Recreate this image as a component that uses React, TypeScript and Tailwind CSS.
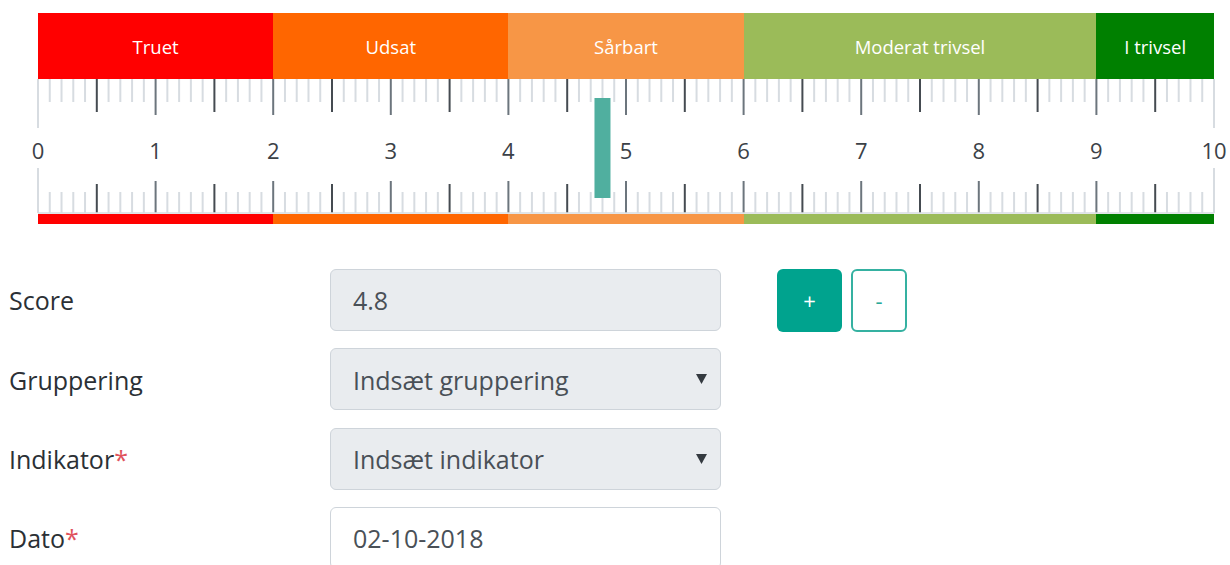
import React from 'react';

type Segment = { label: string; units: number; basis: string; bg: string };

const SEGMENTS: Segment[] = [
  { label: 'Truet', units: 2, basis: 'basis-[20%]', bg: 'bg-[#ff0000]' },
  { label: 'Udsat', units: 2, basis: 'basis-[20%]', bg: 'bg-[#ff6600]' },
  { label: 'Sårbart', units: 2, basis: 'basis-[20%]', bg: 'bg-[#f79646]' },
  { label: 'Moderat trivsel', units: 3, basis: 'basis-[30%]', bg: 'bg-[#9bbb59]' },
  { label: 'I trivsel', units: 1, basis: 'basis-[10%]', bg: 'bg-[#008000]' },
];

const WIDTH = 1176;
const STEP = WIDTH / 100;

// tick heights measured from the top (upper row) and bottom (lower row) of the scale
function Ticks({ score }: { score: number }) {
  const ticks = [];
  for (let i = 0; i <= 100; i++) {
    const x = i * STEP;
    let top = 23;
    let bottom = 21;
    let color = '#d7dce1';
    if (i === 0 || i === 100) {
      top = 49;
      bottom = 45;
    } else if (i % 10 === 0) {
      top = 36;
      bottom = 32;
      color = '#6c757d';
    } else if (i % 5 === 0) {
      top = 33;
      bottom = 29;
      color = '#454b51';
    }
    ticks.push(
      <g key={i}>
        <line x1={x} x2={x} y1={0} y2={top} stroke={color} strokeWidth={2} />
        <line x1={x} x2={x} y1={134 - bottom} y2={134} stroke={color} strokeWidth={2} />
      </g>
    );
  }
  const mx = score * STEP * 10;
  return (
    <svg width={WIDTH} height={135} className="absolute left-0 top-0 overflow-visible">
      {ticks}
      <line x1={0} x2={WIDTH} y1={134} y2={134} stroke="#d7dce1" strokeWidth={1.5} />
      <rect x={mx - 8} y={19} width={16} height={100} fill="#50af9f" />
    </svg>
  );
}

function Scale({ score }: { score: number }) {
  return (
    <div className="ml-[29px] w-[1176px]">
      <div className="flex h-[66px]">
        {SEGMENTS.map((s) => (
          <div
            key={s.label}
            className={`${s.basis} ${s.bg} flex items-center justify-center pt-[2px] text-[18.5px] text-white`}
          >
            {s.label}
          </div>
        ))}
      </div>
      <div className="relative h-[135px]">
        <Ticks score={score} />
        {Array.from({ length: 11 }, (_, n) => (
          <span
            key={n}
            className="absolute top-[70.5px] -translate-x-1/2 -translate-y-1/2 text-[22px] leading-none text-[#3b4147]"
            style={{ left: n * STEP * 10 }}
          >
            {n}
          </span>
        ))}
      </div>
      <div className="flex h-[10px]">
        {SEGMENTS.map((s) => (
          <div key={s.label} className={`${s.basis} ${s.bg}`} />
        ))}
      </div>
    </div>
  );
}

function Row({ label, required, children }: { label: string; required?: boolean; children: React.ReactNode }) {
  return (
    <div className="flex h-[62px] items-center">
      <div className="w-[321px] pt-[2px] text-[25px] text-[#2b3035]">
        {label}
        {required && <span className="text-[#e0525c]">*</span>}
      </div>
      {children}
    </div>
  );
}

function Caret() {
  return (
    <svg width="11" height="10" viewBox="0 0 11 10" className="absolute right-[13px] top-1/2 -translate-y-1/2">
      <path d="M0 0 H11 L5.5 10 Z" fill="#343a40" />
    </svg>
  );
}

export default function App() {
  const score = 4.8;
  const field = 'relative flex h-[62px] w-[391px] items-center rounded-[6px] border border-[#ced4da] px-[22px] pt-[2px] text-[25px] text-[#495057]';

  return (
    <div className="min-h-screen bg-white pl-[9px] pt-[13px] font-['Open_Sans',sans-serif]">
      <Scale score={score} />

      <div className="mt-[45px] flex flex-col gap-[17.3px]">
        <Row label="Score">
          <div className={`${field} bg-[#e9ecef]`}>{score}</div>
          <div className="ml-[56px] flex gap-[9px]">
            <button className="flex h-[63px] w-[65px] items-center justify-center rounded-[6px] bg-[#00a38e] text-[22px] text-white">
              +
            </button>
            <button className="flex h-[63px] w-[56px] items-center justify-center rounded-[6px] border-2 border-[#35b1a1] bg-white text-[22px] text-[#2aa898]">
              -
            </button>
          </div>
        </Row>
        <Row label="Gruppering">
          <div className={`${field} bg-[#e9ecef]`}>
            Indsæt gruppering
            <Caret />
          </div>
        </Row>
        <Row label="Indikator" required>
          <div className={`${field} bg-[#e9ecef]`}>
            Indsæt indikator
            <Caret />
          </div>
        </Row>
        <Row label="Dato" required>
          <div className={`${field} bg-white`}>02-10-2018</div>
        </Row>
      </div>
    </div>
  );
}
